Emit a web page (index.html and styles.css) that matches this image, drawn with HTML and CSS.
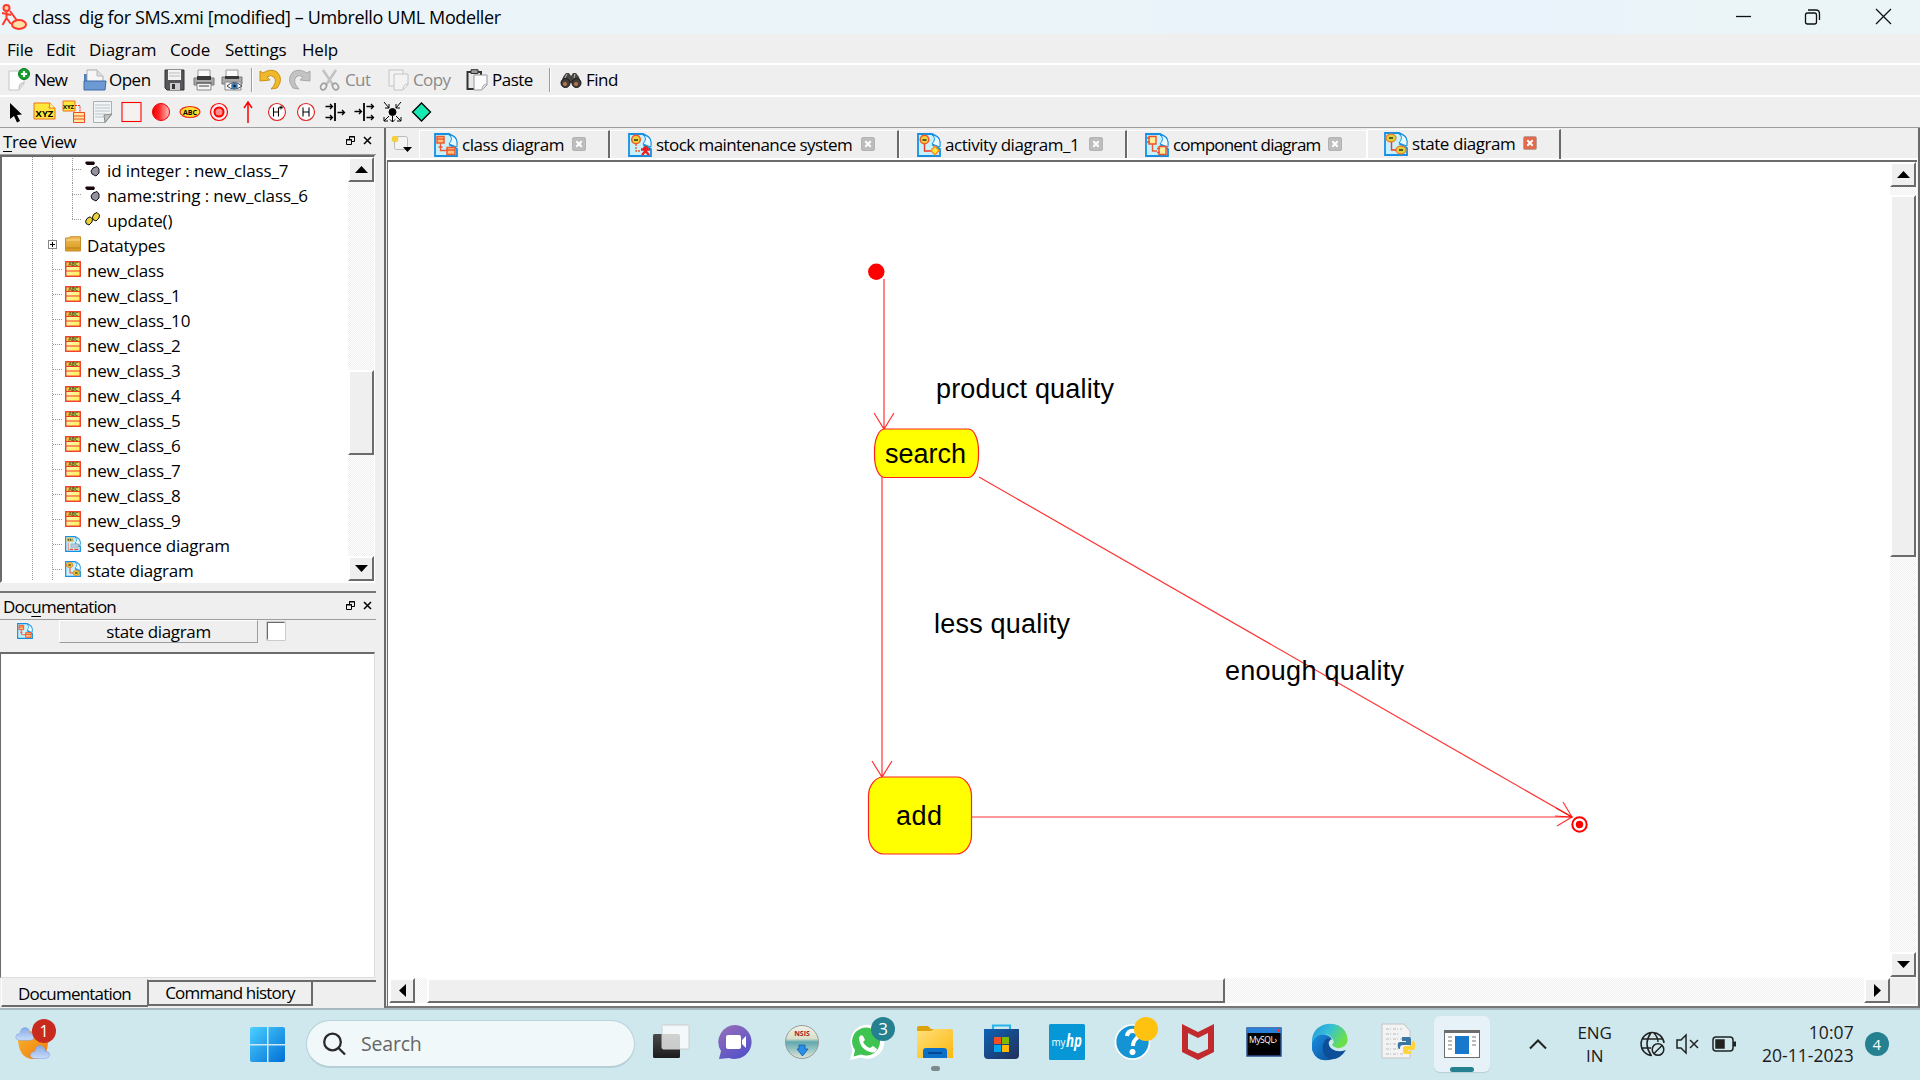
FILE: index.html
```html
<!DOCTYPE html>
<html lang="en">
<head>
<meta charset="utf-8">
<title>Umbrello UML Modeller</title>
<link rel="stylesheet" href="styles.css">
</head>
<body>
<svg class="defs" width="0" height="0">
  <defs>
    <linearGradient id="gYellow" x1="0" y1="0" x2="1" y2="1"><stop offset="0" stop-color="#fffbd8"/><stop offset="1" stop-color="#ffef4a"/></linearGradient>
    <linearGradient id="gFolder" x1="0" y1="0" x2="0" y2="1"><stop offset="0" stop-color="#f0bd55"/><stop offset="1" stop-color="#d8981f"/></linearGradient>
    <linearGradient id="gRed" x1="0" x2="1"><stop offset="0" stop-color="#f00000"/><stop offset=".35" stop-color="#ff2020"/><stop offset="1" stop-color="#ffc0c0"/></linearGradient>
    <linearGradient id="gWin" x1="0" y1="0" x2="1" y2="1"><stop offset="0" stop-color="#4cd0ff"/><stop offset="1" stop-color="#006fd6"/></linearGradient>
    <linearGradient id="gDark" x1="0" y1="0" x2="0" y2="1"><stop offset="0" stop-color="#4a4a4a"/><stop offset="1" stop-color="#1c1c1c"/></linearGradient>
    <linearGradient id="gChat" x1="0" y1="0" x2=".6" y2="1"><stop offset="0" stop-color="#9a6fb8"/><stop offset="1" stop-color="#5553c8"/></linearGradient>
    <linearGradient id="gExp" x1="0" y1="0" x2="1" y2="1"><stop offset="0" stop-color="#ffe07a"/><stop offset="1" stop-color="#fbb80f"/></linearGradient>
    <linearGradient id="gStore" x1="0" y1="0" x2="1" y2="1"><stop offset="0" stop-color="#0d63b5"/><stop offset="1" stop-color="#222f5a"/></linearGradient>
    <linearGradient id="gEdgeA" x1="0" y1="0" x2="1" y2=".4"><stop offset="0" stop-color="#2494dc"/><stop offset=".5" stop-color="#35c0d8"/><stop offset="1" stop-color="#6be04a"/></linearGradient>
    <linearGradient id="gEdgeB" x1="0" y1="0" x2="1" y2="1"><stop offset="0" stop-color="#1a8fe0"/><stop offset="1" stop-color="#0b4f9e"/></linearGradient>
    <linearGradient id="gSun" x1="0" y1="0" x2="1" y2="1"><stop offset="0" stop-color="#f7b52c"/><stop offset="1" stop-color="#f07a10"/></linearGradient>
    <linearGradient id="gCloud" x1="0" y1="0" x2="0" y2="1"><stop offset="0" stop-color="#86a9e6"/><stop offset="1" stop-color="#c9dcfa"/></linearGradient>
    <linearGradient id="gDisc" x1="0" y1="0" x2="0" y2="1"><stop offset="0" stop-color="#f1f1ea"/><stop offset=".4" stop-color="#d9dfc9"/><stop offset=".5" stop-color="#5fa9b0"/><stop offset="1" stop-color="#dfe6d8"/></linearGradient>

    <symbol id="page" viewBox="0 0 24 24"><path d="M1 1H15L19 3Q23 5 22.500 11Q19 8 16 12L23 16V23H1Z" fill="#c9f1fd" stroke="#168fe0" stroke-width="1.800"/><path d="M15 2Q20 5 15 11L23 14V9Q22 3 15 2Z" fill="#e9faff" stroke="#168fe0"/></symbol>
    <symbol id="classDiag" viewBox="0 0 24 24"><use href="#page"/><g fill="#ffc27a" stroke="#f05a32" stroke-width="1.500"><path d="M3 3.500H10V10H3ZM3 6H10M13 14.500H21V21.500H13ZM13 17H21"/></g><path d="M6.500 10V17.500H13M4.500 14H8.500" fill="none" stroke="#f05a32" stroke-width="1.300"/></symbol>
    <symbol id="stockDiag" viewBox="0 0 24 24"><use href="#page"/><circle cx="8" cy="6.500" r="4.300" fill="#f0d040" stroke="#ee5a28" stroke-width="1.500"/><path d="M6 7H10" stroke="#5a5a20" stroke-width="2"/><path d="M8 11V18H12" fill="none" stroke="#f05a32" stroke-width="1.400" stroke-dasharray="2 1"/><path d="M13 16.500H22M14 22L17.500 18L21 22" fill="none" stroke="#e82020" stroke-width="2.400"/><circle cx="17.500" cy="15.500" r="2.600" fill="#e82020"/></symbol>
    <symbol id="activityDiag" viewBox="0 0 24 24"><use href="#page"/><circle cx="7.500" cy="6.500" r="4.300" fill="#f0d040" stroke="#ee5a28" stroke-width="1.500"/><path d="M5.500 7H9.500" stroke="#5a5a20" stroke-width="2"/><path d="M7.500 11V18H14" fill="none" stroke="#f03a22" stroke-width="1.400"/><path d="M18 13L22 17.500L18 22L14 17.500Z" fill="#ffe63a" stroke="#f08a20" stroke-width="1.300"/></symbol>
    <symbol id="componentDiag" viewBox="0 0 24 24"><use href="#page"/><g fill="#ffef9a" stroke="#f0502a" stroke-width="1.400"><path d="M4 3.500H11V11H4ZM14 13.500H21V21.500H14Z"/><path d="M2 5H5M2 9H5M12 15.500H15M12 19.500H15"/></g><path d="M7.500 11V18H12" fill="none" stroke="#f05a32" stroke-width="1.400"/></symbol>
    <symbol id="stateDiag" viewBox="0 0 24 24"><use href="#page"/><g fill="#d9d238" stroke="#f07a32" stroke-width="1.300"><ellipse cx="7" cy="6" rx="5" ry="3.900"/><ellipse cx="17" cy="18" rx="5" ry="3.900"/></g><path d="M5 6H9M15 18H19" stroke="#5a5a20" stroke-width="2"/><path d="M7.500 10V18H12" fill="none" stroke="#f03a22" stroke-width="1.400"/></symbol>
    <symbol id="seqDiag" viewBox="0 0 24 24"><use href="#page"/><path d="M2 2H13V9H2Z" fill="#d8ce78"/><path d="M4 5.500H11" stroke="#5a5a30" stroke-width="3" stroke-dasharray="2 1"/><path d="M9 12H20V17H9Z" fill="#b5cdd8" stroke="#9ab"/><path d="M7 20H12M14 20H20" stroke="#f04a32" stroke-width="2"/><path d="M5 10V22" stroke="#f05a32"/></symbol>
    <symbol id="cls" viewBox="0 0 16 16"><rect x=".75" y=".75" width="14.500" height="14.500" fill="url(#gYellow)"/><path d="M1 1H15V5H1Z" fill="#e4d44e"/><path d="M1 5.500H15M1 10H15" stroke="#f03a28" stroke-width="1.200"/><rect x=".75" y=".75" width="14.500" height="14.500" fill="none" stroke="#f03a28" stroke-width="1.400"/><text x="8" y="4.800" text-anchor="middle" font-size="5" font-weight="700" fill="#55551c">ABC</text></symbol>
    <symbol id="attr" viewBox="0 0 16 16"><path d="M1 .5H9L10 2L9 4H2L0 2Z" fill="#1a0508"/><path d="M8 7L12 5.500L14 8V12L11 15L7 13L6 10Z" fill="#9490a0" stroke="#111"/></symbol>
    <symbol id="oper" viewBox="0 0 16 16"><path d="M2 7.500L5 5.800L7.500 8L7 11L4 14L1 12.500L.7 10ZM9 3L12 1.500L14.500 4L14 7L11 10L8 8.500L7.500 6Z" fill="#ead23a" stroke="#111"/></symbol>
    <symbol id="folder" viewBox="0 0 16 16"><path d="M.5 2H4L5 .7H15.500V15H.5Z" fill="url(#gFolder)" stroke="#c98d28"/><path d="M1 4H15" stroke="#f8d890"/><path d="M1 12H15" stroke="#bb7c14"/></symbol>
    <symbol id="float" viewBox="0 0 9 9"><path d="M3.500 3V.5H8.500V5.500H6M3 1H9M.5 3.500H5.500V8.500H.5ZM0 4H6" fill="none" stroke="#000"/></symbol>
    <symbol id="xx" viewBox="0 0 9 9"><path d="M1 1L8 8M8 1L1 8" stroke="#000" stroke-width="1.500"/></symbol>
    <symbol id="tabx" viewBox="0 0 14 14"><rect x=".5" y=".5" width="13" height="13" rx="1.500" fill="currentColor" stroke="#9b9b9b" stroke-opacity=".6"/><path d="M4.300 4.300L9.700 9.700M9.700 4.300L4.300 9.700" stroke="#fff" stroke-width="2"/></symbol>
    <symbol id="cloud" viewBox="0 0 22 16"><path d="M5 15.500Q.5 15 .8 11.500Q1.500 8 5.500 8Q6 2 11 1.500Q16 2 16.500 7.500Q21 7.500 21.300 11.500Q21 15 17 15.500Z" fill="url(#gCloud)" stroke="#7a9bdc" stroke-width=".5"/></symbol>
  </defs>
</svg>

<div class="screen">
  <header class="titlebar">
    <svg class="appicon" width="26" height="26" viewBox="0 0 26 26"><g fill="none" stroke="#ff3a2a" stroke-width="2"><circle cx="5.500" cy="4" r="3" fill="#ffd0b0"/><path d="M5.500 7V14M1 9L10 11M5.500 14L1.500 21M5.500 14L10 20M9 7L17 18"/><ellipse cx="18" cy="20.500" rx="7" ry="4.500" fill="#ffe0a8"/></g></svg>
    <span class="title">class  dig for SMS.xmi [modified] – Umbrello UML Modeller</span>
    <svg class="winbtns" width="160" height="20" viewBox="0 0 160 20" fill="none" stroke="#111" stroke-width="1.300"><path d="M0 9.500H15"/><rect x="69.500" y="6" width="11" height="11" rx="2"/><path d="M72 3H80Q83.500 3 83.500 7V13"/><path d="M140 2L155 17M155 2L140 17"/></svg>
  </header>
  <nav class="menubar"><span class="m1">File</span><span class="m2">Edit</span><span class="m3">Diagram</span><span class="m4">Code</span><span class="m5">Settings</span><span class="m6">Help</span></nav>
  <div class="toolbar main-tools">
    <div class="tool w-new"><svg width="24" height="24" viewBox="0 0 24 24"><path d="M2 3H17V16L12 22H2Z" fill="#fdfdfd" stroke="#c4c4c4"/><path d="M17 15Q12 14 12 21" fill="#ddd" stroke="#bbb"/><circle cx="17" cy="6" r="5.500" fill="#16a02c" stroke="#0a7a1c"/><path d="M17 3V9M14 6H20" stroke="#fff" stroke-width="2.200"/></svg><span>New</span></div>
    <div class="tool w-open"><svg width="24" height="24" viewBox="0 0 24 24"><path d="M1 6H5L6 4H13V14H1Z" fill="#4b7fc0"/><path d="M4 2H14L20 8V17H4Z" fill="#f6f6f6" stroke="#aaa"/><path d="M14 2V8H20" fill="#ddd" stroke="#bbb"/><path d="M1 13H23L22 22H1Z" fill="#6d9ad2" stroke="#3d6aa8"/></svg><span>Open</span></div>
    <div class="tool w-save"><svg width="22" height="22" viewBox="0 0 22 22"><path d="M1 1H20V21H3L1 19Z" fill="#55565a" stroke="#333"/><path d="M4 1H17V11H4Z" fill="#f3f3f3"/><path d="M5 4H16M5 7H16" stroke="#bbb"/><path d="M6 14H16V21H6Z" fill="#ccc"/><path d="M8 15H11V20H8Z" fill="#333"/></svg></div>
    <div class="tool w-print"><svg width="22" height="22" viewBox="0 0 22 22"><path d="M5 1H17V9H5Z" fill="#fafafa" stroke="#999"/><path d="M1 9H21V16H1Z" fill="#aaa" stroke="#777"/><path d="M4 7H18V11H4Z" fill="#3a3a3a"/><path d="M4 14H18V21H4Z" fill="#f3f3f3" stroke="#888"/><path d="M3 14H19M6 17H16" stroke="#444"/></svg></div>
    <div class="tool w-prev"><svg width="22" height="22" viewBox="0 0 22 22"><path d="M5 1H17V9H5Z" fill="#fafafa" stroke="#999"/><path d="M1 8H21V15H1Z" fill="#aaa" stroke="#777"/><path d="M4 7H18V10H4Z" fill="#3a3a3a"/><path d="M4 13H20V21H4Z" fill="#f3f3f3" stroke="#888"/><path d="M6 17Q13 10 21 17Q13 23 6 17Z" fill="#fff" stroke="#445"/><circle cx="13.500" cy="17" r="3.300" fill="#3c7cae"/><circle cx="13.500" cy="17" r="1.300" fill="#123"/></svg></div>
    <i class="sep"></i>
    <div class="tool w-undo"><svg width="24" height="22" viewBox="0 0 24 22"><path d="M1 2L4 4Q12 -1 18 3Q25 10 18 19L12 20Q19 13 15 8Q12 5 8 8L11 11L1 12Z" fill="#f0b92c" stroke="#c99012"/></svg></div>
    <div class="tool w-redo"><svg width="24" height="22" viewBox="0 0 24 22"><path d="M23 2L20 4Q12 -1 6 3Q-1 10 6 19L12 20Q5 13 9 8Q12 5 16 8L13 11L23 12Z" fill="#c3c3c3" stroke="#a8a8a8"/></svg></div>
    <div class="tool off w-cut"><svg width="22" height="22" viewBox="0 0 22 22" fill="none" stroke="#a0a0a0"><path d="M4 1L14 16M17 1L7 16" stroke="#c2c2c2" stroke-width="2.500"/><ellipse cx="4.500" cy="17.500" rx="2.700" ry="3.500" stroke-width="1.700" transform="rotate(30 4.500 17.500)"/><ellipse cx="16.500" cy="17.500" rx="2.700" ry="3.500" stroke-width="1.700" transform="rotate(-30 16.500 17.500)"/></svg><span>Cut</span></div>
    <div class="tool off w-copy"><svg width="22" height="22" viewBox="0 0 22 22" fill="#f3f3f3" stroke="#c4c4c4"><path d="M1 1H15V17H1Z"/><path d="M6 5H20V16L15 21H6Z"/><path d="M20 15Q15 15 15 21"/></svg><span>Copy</span></div>
    <div class="tool w-paste"><svg width="22" height="22" viewBox="0 0 22 22"><path d="M1.500 3H15V20H1.500Z" fill="#e8e8e8" stroke="#333" stroke-width="2"/><path d="M5 .7H12V4.500H5Z" fill="#999" stroke="#333"/><path d="M8 6H21V16L16 21H8Z" fill="#fcfcfc" stroke="#999"/><path d="M21 15Q16 15 16 21" fill="#ddd" stroke="#aaa"/></svg><span>Paste</span></div>
    <i class="sep"></i>
    <div class="tool w-find"><svg width="22" height="18" viewBox="0 0 22 18"><path d="M3 6L6 2H9L11 5L13 2H16L19 6L21 12H1Z" fill="#4a4440"/><circle cx="5.500" cy="12" r="4.500" fill="#443d3a" stroke="#181818"/><circle cx="16.500" cy="12" r="4.500" fill="#443d3a" stroke="#181818"/><circle cx="5" cy="13" r="2" fill="#b07850"/><circle cx="16" cy="13" r="2" fill="#b07850"/><path d="M7 3L5 7M15 3L14 7" stroke="#bbb"/></svg><span>Find</span></div>
  </div>
  <div class="toolbar uml-tools">
    <svg viewBox="0 0 29 26"><path d="M9 4L21 15.500L16 16L19 22L16 23.500L13 17L9 20Z" fill="#000"/></svg>
    <svg viewBox="0 0 29 26"><path d="M4 4H20L25 9V20H4Z" fill="#ffe63c" stroke="#f07018"/><path d="M20 4L19 9H25" fill="#fff8a0" stroke="#f07018"/><text x="14.500" y="17.500" text-anchor="middle" font-size="9.500" font-weight="700">XYZ</text></svg>
    <svg viewBox="0 0 29 26"><path d="M4 2H16V12H4Z" fill="#ffe63c" stroke="#f07018"/><text x="9.500" y="10" text-anchor="middle" font-size="6" font-weight="700">XYZ</text><path d="M16 6.500H21V13" fill="none" stroke="#f22" stroke-dasharray="2 1"/><path d="M14.500 13.500H25.500V23.500H14.500ZM14.500 17H25.500M14.500 20H25.500" fill="#ffe9a0" stroke="#f04a20"/></svg>
    <svg viewBox="0 0 29 26"><path d="M5.500 2.500H23.500V16L17 23.500H5.500Z" fill="#f2f5f6" stroke="#a9b0b3"/><path d="M7 6H22M7 9H22M7 12H22M7 15H18M7 18H16" stroke="#b9c3c8"/><path d="M23.500 15L16 16L17 23.500Z" fill="#c4c4c4" stroke="#888"/></svg>
    <svg viewBox="0 0 29 26"><rect x="5" y="3.500" width="19" height="19" fill="#f5f1f1" stroke="#f00" stroke-width="1.100"/></svg>
    <svg viewBox="0 0 29 26"><circle cx="15" cy="13" r="8.500" fill="url(#gRed)" stroke="#f00000"/></svg>
    <svg viewBox="0 0 29 26"><ellipse cx="15" cy="13" rx="10" ry="5.500" fill="#ffe030" stroke="#f02a18" stroke-width="1.200"/><text x="15" y="15.800" text-anchor="middle" font-size="7" font-weight="700">ABC</text></svg>
    <svg viewBox="0 0 29 26"><circle cx="15" cy="13" r="8.500" fill="#fbeeee" stroke="#f00" stroke-width="1.200"/><circle cx="15" cy="13" r="4.500" fill="#ff8a8a" stroke="#f00" stroke-width="2"/></svg>
    <svg viewBox="0 0 29 26"><path d="M15 24V4M11 9L15 3L19 9" fill="none" stroke="#f00" stroke-width="1.500"/></svg>
    <svg viewBox="0 0 29 26"><circle cx="15" cy="13" r="8.500" fill="#fff" stroke="#e02020" stroke-width="1.100"/><path d="M11.500 8.500V17.500M11.500 13H16.500M16.500 8.500V17.500" fill="none" stroke="#000" stroke-width="1.100"/><path d="M19 6.500V10.500M17.200 8.500H20.800M17.700 7.200L20.300 9.800M20.300 7.200L17.700 9.800" stroke="#000" stroke-width=".8"/></svg>
    <svg viewBox="0 0 29 26"><circle cx="15" cy="13" r="8.500" fill="#fff" stroke="#e02020" stroke-width="1.100"/><path d="M12 8.500V17.500M12 13H18M18 8.500V17.500" fill="none" stroke="#000" stroke-width="1.100"/></svg>
    <svg viewBox="0 0 29 26" fill="none" stroke="#000"><path d="M15 4V22" stroke-width="1.800"/><path d="M5.500 7.500H12.500M5.500 18.500H12.500M17.500 13.500H24.500M10 5L12.500 7.500L10 10M10 16L12.500 18.500L10 21M22 11L24.500 13.500L22 16" stroke-width="1.300"/></svg>
    <svg viewBox="0 0 29 26" fill="none" stroke="#000"><path d="M15 4V22" stroke-width="1.800"/><path d="M5.500 12.500H12.500M17.500 7.500H24.500M17.500 18.500H24.500M10 10L12.500 12.500L10 15M22 5L24.500 7.500L22 10M22 16L24.500 18.500L22 21" stroke-width="1.300"/></svg>
    <svg viewBox="0 0 29 26" fill="none" stroke="#000"><circle cx="14.500" cy="13" r="3.500" fill="#000"/><path d="M6 3L11 9M23 3L18 9M11 5V9H7M18 5V9H22M11 17L6 22M18 17L23 22M14.500 17V23M6 18V22H10M23 18V22H19M12 20.500L14.500 23L17 20.500"/></svg>
    <svg viewBox="0 0 29 26"><path d="M14.500 4L23.500 13L14.500 22L5.500 13Z" fill="#17e8b4" stroke="#000" stroke-width="1.300"/></svg>
  </div>

  <main class="work">
    <aside class="side">
      <div class="docktitle"><span><u>T</u>ree View</span><svg width="9" height="9"><use href="#float"/></svg><svg width="9" height="9"><use href="#xx"/></svg></div>
      <div class="treebox">
        <div class="tree">
          <div class="row deep"><svg><use href="#attr"/></svg><span>id integer : new_class_7</span></div>
          <div class="row deep"><svg><use href="#attr"/></svg><span>name:string : new_class_6</span></div>
          <div class="row deep last"><svg><use href="#oper"/></svg><span>update()</span></div>
          <div class="row expand"><svg><use href="#folder"/></svg><span>Datatypes</span></div>
          <div class="row"><svg><use href="#cls"/></svg><span>new_class</span></div>
          <div class="row"><svg><use href="#cls"/></svg><span>new_class_1</span></div>
          <div class="row"><svg><use href="#cls"/></svg><span>new_class_10</span></div>
          <div class="row"><svg><use href="#cls"/></svg><span>new_class_2</span></div>
          <div class="row"><svg><use href="#cls"/></svg><span>new_class_3</span></div>
          <div class="row"><svg><use href="#cls"/></svg><span>new_class_4</span></div>
          <div class="row"><svg><use href="#cls"/></svg><span>new_class_5</span></div>
          <div class="row"><svg><use href="#cls"/></svg><span>new_class_6</span></div>
          <div class="row"><svg><use href="#cls"/></svg><span>new_class_7</span></div>
          <div class="row"><svg><use href="#cls"/></svg><span>new_class_8</span></div>
          <div class="row"><svg><use href="#cls"/></svg><span>new_class_9</span></div>
          <div class="row"><svg><use href="#seqDiag"/></svg><span>sequence diagram</span></div>
          <div class="row"><svg><use href="#stateDiag"/></svg><span>state diagram</span></div>
        </div>
        <div class="vscroll">
          <div class="sbtn"><svg width="13" height="7"><path d="M6.500 0L13 7H0Z"/></svg></div>
          <div class="thumb tree-thumb"></div>
          <div class="sbtn end"><svg width="13" height="7"><path d="M0 0H13L6.500 7Z"/></svg></div>
        </div>
      </div>
      <div class="docktitle doc"><span>Doc<u>u</u>mentation</span><svg width="9" height="9"><use href="#float"/></svg><svg width="9" height="9"><use href="#xx"/></svg></div>
      <div class="docbar"><svg width="16" height="16"><use href="#classDiag"/></svg><div class="docname">state diagram</div><div class="check"></div></div>
      <div class="doctext"></div>
      <div class="docktabs"><div class="dt on">Documentation</div><div class="dt">Command history</div><div class="dt-rest"></div></div>
    </aside>

    <section class="editor">
      <div class="tabs">
        <div class="corner"><svg width="22" height="20" viewBox="0 0 22 20"><rect x="3.500" y="1.500" width="13" height="13" rx="2" fill="#f3f3f3" stroke="#bbb"/><circle cx="4" cy="4" r="3.300" fill="#f4ce3c"/><path d="M12 12H21L16.500 17Z"/></svg></div>
        <div class="tab t1"><svg class="ti"><use href="#classDiag"/></svg><span>class diagram</span><svg class="tx"><use href="#tabx"/></svg></div>
        <div class="tab t2"><svg class="ti"><use href="#stockDiag"/></svg><span>stock maintenance system</span><svg class="tx"><use href="#tabx"/></svg></div>
        <div class="tab t3"><svg class="ti"><use href="#activityDiag"/></svg><span>activity diagram_1</span><svg class="tx"><use href="#tabx"/></svg></div>
        <div class="tab t4"><svg class="ti"><use href="#componentDiag"/></svg><span>component diagram</span><svg class="tx"><use href="#tabx"/></svg></div>
        <div class="tab t5 active"><svg class="ti"><use href="#stateDiag"/></svg><span>state diagram</span><svg class="tx"><use href="#tabx"/></svg></div>
      </div>
      <div class="view">
        <svg class="canvas" width="1501" height="816" viewBox="389 162 1501 816">
          <g fill="none" stroke="#ff0000" stroke-opacity=".8" stroke-width="1.200">
            <path d="M884 279V429M874 413L884 429L894 413"/>
            <path d="M882 477V777M872 761L882 777L892 761"/>
            <path d="M979 477L1572 817M1563 802L1572 817L1555 816"/>
            <path d="M972 817H1572M1556 808L1572 817L1557 826"/>
          </g>
          <circle cx="876.300" cy="271.700" r="8.200" fill="#f00"/>
          <rect x="874.500" y="429" width="104" height="48.500" rx="10" ry="22" fill="#ff0" stroke="#f22" stroke-width="1.200"/>
          <rect x="868.500" y="777" width="103" height="77" rx="15" ry="19" fill="#ff0" stroke="#f22" stroke-width="1.200"/>
          <circle cx="1579.500" cy="824.500" r="7.200" fill="#fff" stroke="#f00" stroke-width="2"/><circle cx="1579.500" cy="824.500" r="3.700" fill="#f00"/>
          <g class="dtext">
            <text x="885" y="462.500" textLength="81">search</text>
            <text x="896" y="825" textLength="46">add</text>
            <text x="936" y="398" textLength="178">product quality</text>
            <text x="934" y="632.500" textLength="136">less quality</text>
            <text x="1225" y="680" textLength="179">enough quality</text>
          </g>
        </svg>
        <div class="vscroll big">
          <div class="sbtn"><svg width="13" height="7"><path d="M6.500 0L13 7H0Z"/></svg></div>
          <div class="thumb view-thumb"></div>
          <div class="sbtn end"><svg width="13" height="7"><path d="M0 0H13L6.500 7Z"/></svg></div>
        </div>
        <div class="hscroll">
          <div class="sbtn"><svg width="7" height="13"><path d="M7 0V13L0 6.500Z"/></svg></div>
          <div class="thumb h-thumb"></div>
          <div class="sbtn hend"><svg width="7" height="13"><path d="M0 0V13L7 6.500Z"/></svg></div>
        </div>
        <div class="nook"></div>
      </div>
    </section>
  </main>

  <footer class="taskbar">
    <svg class="weather" width="48" height="56" viewBox="0 0 48 56"><path d="M6 22Q8 16 20 16Q34 16 36 28Q35 44 22 44Q6 44 6 22Z" fill="url(#gSun)"/><use href="#cloud" x="3" y="11" width="20" height="15"/><use href="#cloud" x="17" y="29" width="22" height="15"/><circle cx="32" cy="16" r="12" fill="#c92a1e"/><text x="32" y="22" text-anchor="middle" font-size="16" fill="#fff">1</text></svg>
    <svg class="start" width="36" height="36" viewBox="0 0 36 36"><path d="M2 0H17V17H0V2Q0 0 2 0ZM18.500 0H33Q35 0 35 2V17H18.500ZM0 18.500H17V35H2Q0 35 0 33ZM18.500 18.500H35V33Q35 35 33 35H18.500Z" fill="url(#gWin)"/></svg>
    <div class="search"><svg width="24" height="24" viewBox="0 0 24 24" fill="none" stroke="#2a2a2a" stroke-width="2.300"><circle cx="10.500" cy="10" r="8.300"/><path d="M16.500 16L23 22.500"/></svg><span>Search</span></div>
    <div class="apps">
      <div class="app"><svg viewBox="0 0 48 56"><rect x="9" y="18" width="27" height="24" rx="1.500" fill="url(#gDark)"/><rect x="18" y="9" width="27" height="24" rx="1.500" fill="#fff" fill-opacity=".75" stroke="#ccc"/></svg></div>
      <div class="app"><svg viewBox="0 0 48 56"><path d="M24 9A17 17 0 1 1 17 42L7 43L9 35A17 17 0 0 1 24 9Z" fill="url(#gChat)"/><rect x="14" y="19" width="15" height="14" rx="2" fill="#fff"/><path d="M30 24L34 20V32L30 28Z" fill="#fff"/></svg></div>
      <div class="app"><svg viewBox="0 0 48 56"><circle cx="24" cy="26" r="16.500" fill="url(#gDisc)" stroke="#999c98"/><text x="24" y="20" text-anchor="middle" font-size="7" font-weight="700" fill="#a22">NSIS</text><path d="M21 29H27V33H30L24.500 40L19 33H21Z" fill="#2a8fe6" stroke="#0a5aa8" stroke-width=".8"/></svg></div>
      <div class="app"><svg viewBox="0 0 48 56"><path d="M6 44L8.500 34A17 17 0 1 1 17 41.500Z" fill="#fff"/><path d="M9.500 40.500L11 34A14 14 0 1 1 17 38.500Z" fill="#3fc351"/><path d="M15 22Q16 18 19 20L21 24L19 26Q22 31 26 32L29 30L33 33Q32 37 28 36.500Q16 34 15 22Z" fill="#fff"/><circle cx="39" cy="13" r="12" fill="#25808f"/><text x="39" y="19" text-anchor="middle" font-size="17" fill="#fff">3</text></svg></div>
      <div class="app"><svg viewBox="0 0 48 56"><path d="M6 12Q6 10 8 10H17L20 13H40V22H6Z" fill="#dda20c"/><path d="M6 15H20L23 13H40Q42 13 42 15V42H6Z" fill="url(#gExp)"/><path d="M12 42V35Q12 32 15 32H33Q36 32 36 35V42Z" fill="#0d70c8"/><path d="M17 37H31" stroke="#06458a" stroke-width="1.800"/><rect x="20" y="50" width="9" height="5" rx="2.500" fill="#7d898d"/></svg></div>
      <div class="app"><svg viewBox="0 0 48 56"><path d="M16 15V9.500H33V15" fill="none" stroke="#28b6ea" stroke-width="2.200"/><path d="M7 13H42V39Q42 43 38 43H11Q7 43 7 39Z" fill="url(#gStore)"/><path d="M17 21H24V28H17Z" fill="#f25022"/><path d="M25 21H32V28H25Z" fill="#7fba00"/><path d="M17 29H24V36H17Z" fill="#00a4ef"/><path d="M25 29H32V36H25Z" fill="#ffb900"/></svg></div>
      <div class="app"><svg viewBox="0 0 48 56"><rect x="6" y="8" width="36" height="36" rx="1.500" fill="#0797d6"/><text x="8.500" y="30" font-size="10" fill="#fff" textLength="14" lengthAdjust="spacingAndGlyphs">my</text><text x="23" y="30.500" font-size="17" font-style="italic" font-weight="700" fill="#fff" textLength="16" lengthAdjust="spacingAndGlyphs">hp</text></svg></div>
      <div class="app"><svg viewBox="0 0 48 56"><circle cx="23.500" cy="26" r="17" fill="#1494d4" stroke="#fff" stroke-width="1.700"/><path d="M18 20Q19 14 25 15Q31 17 28 22Q24 25 24 30" fill="none" stroke="#fff" stroke-width="4"/><circle cx="23.500" cy="36" r="3" fill="#fff"/><circle cx="37" cy="13" r="12" fill="#ffc20e"/></svg></div>
      <div class="app"><svg viewBox="0 0 48 56"><path d="M7 8L23 16L39 8V36L23 44L7 36ZM13 17V33L23 37.500L33 33V17L23 22Z" fill="#c12b2d" fill-rule="evenodd"/></svg></div>
      <div class="app"><svg viewBox="0 0 48 56"><rect x="6" y="12" width="34" height="28" fill="#000" stroke="#2a5290" stroke-width="1.500"/><path d="M6 12H40V17H6Z" fill="#2a7fd8"/><path d="M36 13H39V16H36Z" fill="#e33"/><text x="8" y="27" font-size="8.500" fill="#fff" textLength="28">MySQL›</text></svg></div>
      <div class="app"><svg viewBox="0 0 48 56"><path d="M5 28Q4 14 16 9Q30 5 38 15Q44 26 36 31Q29 34 25 29Q29 25 23 20Q14 15 5 28Z" fill="url(#gEdgeA)"/><path d="M5 27Q11 15 22 20Q25 22 25 24Q19 20 16 29Q17 38 26 43Q10 48 5 34Z" fill="url(#gEdgeB)"/><path d="M16 28Q19 20 24 23Q19 28 25 33Q31 37 39 34Q32 45 22 43Q14 38 16 28Z" fill="#0c4f98"/></svg></div>
      <div class="app"><svg viewBox="0 0 48 56"><path d="M8 8H30L36 15V42H8Z" fill="#f3f3f3" stroke="#c4c4c4"/><path d="M12 13H28M12 18H24M12 23H30M12 28H22M12 33H24M12 38H30" stroke="#bbb" stroke-dasharray="3 1 1 2"/><path d="M28 21H35Q37 21 37 24V29H29Q26 29 26 32V33H25Q23 31 24 27Q24 26 27 26H32V25H28Z" fill="#3a75a4"/><path d="M37 38H31Q29 38 29 35V32Q29 30 32 30H36Q38 30 38 25H40Q42 28 41 32Q41 34 39 34H34V35H37Z" fill="#ffd43b"/></svg></div>
      <div class="app current"><svg viewBox="0 0 48 56"><rect x="6.500" y="14.500" width="35" height="27" fill="#fff" stroke="#6d6d6d"/><path d="M6 14H42V17H6Z" fill="#6d6d6d"/><path d="M17 20H31V38H17Z" fill="#1878cc"/><path d="M10 21H14M10 25H14M10 29H14M10 33H14M34 21H38M34 25H38M34 29H38" stroke="#bbb" stroke-width="2"/><rect x="12" y="51" width="24" height="5" rx="2.500" fill="#25808f"/></svg></div>
    </div>
    <svg class="chev" width="18" height="11" viewBox="0 0 18 11"><path d="M1 9.500L9 1.500L17 9.500" fill="none" stroke="#222" stroke-width="2"/></svg>
    <div class="lang"><span>ENG</span><span>IN</span></div>
    <svg class="sys" width="98" height="28" viewBox="0 0 98 28" fill="none" stroke="#222" stroke-width="1.500"><path d="M12 25.500A11.500 11.500 0 1 1 24 13M11 25Q3 14 11 2.500M13.500 2.500Q18 7 18 12M2 9H23M2 18H11"/><circle cx="18" cy="19.500" r="5.800"/><path d="M14 23.500L22 15.500"/><path d="M37 10H41L46 5V23L41 18H37Z"/><path d="M50 10L58 18M58 10L50 18"/><rect x="73" y="7" width="20" height="14" rx="3"/><path d="M76 10H84V18H76Z" fill="#222"/><path d="M94.500 11.500V16.500" stroke-width="3"/></svg>
    <div class="clock"><span>10:07</span><span>20-11-2023</span></div>
    <div class="count">4</div>
  </footer>
</div>
</body>
</html>
```
FILE: styles.css
```css
* { box-sizing: border-box; }
body { margin: 0; overflow: hidden; background: #efefef; color: #000; font: 17px "Open Sans", "Noto Sans", sans-serif; }
svg { display: block; flex: none; }
svg text { font-family: "Open Sans", "Noto Sans", sans-serif; }
svg .dtext text, .dtext text { font-family: "Liberation Sans", Arial, sans-serif; font-size: 27px; }
.defs { position: absolute; }
.screen { width: 1920px; height: 1080px; display: flex; flex-direction: column; }
span { white-space: pre; }

.titlebar { height: 34px; flex: none; display: flex; align-items: center; background: linear-gradient(90deg, #ebf4f8 50%, #eaf2fb 80%, #ebf5f7 90%); }
.appicon { margin: 0 5px 0 1px; }
.title { font-size: 18px; letter-spacing: -.38px; }
.winbtns { margin: 0 24px 0 auto; }
.menubar { height: 31px; flex: none; padding: 1px 0 0 7px; display: flex; align-items: center; border-bottom: 2px solid; border-image: linear-gradient(#9d9d9d 50%, #fff 50%) 2; }
.m1 { width: 39px; } .m2 { width: 43px; } .m3 { width: 81px; } .m4 { width: 55px; } .m5 { width: 77px; }
.menubar span { letter-spacing: -.2px; }
.menubar .m3 { letter-spacing: 0; }
.toolbar { flex: none; display: flex; align-items: center; }
.main-tools { height: 32px; padding-left: 7px; border-bottom: 2px solid; border-image: linear-gradient(#9d9d9d 50%, #fff 50%) 2; }
.tool { display: flex; align-items: center; gap: 4px; letter-spacing: -.5px; }
.tool span { margin-top: -2px; }
.off { color: #8a8a8a; }
.w-new { width: 76px; gap: 3px; letter-spacing: -.8px; } .w-open { width: 81px; gap: 2px; } .w-save { width: 29px; } .w-print { width: 28px; } .w-prev { width: 30px; }
.w-undo { width: 28px; } .w-redo { width: 32px; } .w-cut { width: 69px; letter-spacing: -.6px; } .w-copy { width: 78px; gap: 3px; letter-spacing: -.6px; } .w-paste { width: 83px; } .w-find { gap: 4px; margin-left: 3px; }
.sep { width: 2px; height: 24px; border-left: 1px solid #9d9d9d; border-right: 1px solid #fff; margin-right: 6px; }
.uml-tools { height: 31px; padding-left: 1px; border-bottom: 1px solid #9d9d9d; }
.uml-tools svg { width: 29px; height: 26px; }

.work { height: 880px; flex: none; display: flex; }
.side { width: 376px; flex: none; display: flex; flex-direction: column; }
.docktitle { height: 27px; flex: none; display: flex; align-items: center; gap: 8px; padding: 0 4px 0 3px; letter-spacing: -.4px; border-bottom: 1px solid #9d9d9d; }
.docktitle span { flex: 1; }
.docktitle u { text-decoration-thickness: 1px; text-underline-offset: 3px; }
.docktitle svg { margin-top: -2px; }
.treebox { height: 428px; flex: none; display: flex; margin-right: 1px; border: 2px solid; border-color: #6b6b6b #fff #fff #6b6b6b; border-right-width: 1px; background: #fff; overflow: hidden; }
.tree { flex: 1; padding-top: 1px; background: repeating-linear-gradient(#999 0 1px, transparent 1px 2px) 30px 0 / 1px 100% no-repeat, repeating-linear-gradient(#999 0 1px, transparent 1px 2px) 50px 0 / 1px 100% no-repeat; }
.row { height: 25px; display: flex; align-items: center; gap: 6px; padding-left: 63px; letter-spacing: -.2px; background: repeating-linear-gradient(90deg, #999 0 1px, transparent 1px 2px) 51px 11px / 9px 1px no-repeat; }
.row svg { width: 16px; height: 16px; margin-top: -3px; }
.deep { padding-left: 83px; letter-spacing: -.12px; background: repeating-linear-gradient(90deg, #999 0 1px, transparent 1px 2px) 70px 11px / 10px 1px no-repeat, repeating-linear-gradient(#999 0 1px, transparent 1px 2px) 70px 0 / 1px 100% no-repeat; }
.last { background-size: 10px 1px, 1px 12px; }
.expand { background: linear-gradient(#000, #000) 48px 11px / 5px 1px no-repeat, linear-gradient(#000, #000) 50px 9px / 1px 5px no-repeat, linear-gradient(#fff, #fff) 47px 8px / 7px 7px no-repeat, linear-gradient(#888, #888) 46px 7px / 9px 9px no-repeat; }
.vscroll, .hscroll { background: repeating-conic-gradient(#fff 0 25%, #efefef 0 50%) 0 0 / 2px 2px; display: flex; }
.vscroll { width: 26px; flex-direction: column; }
.sbtn, .thumb { background: #efefef; border: 2px solid; border-color: #fff #6b6b6b #6b6b6b #fff; flex: none; }
.sbtn { width: 26px; height: 25px; display: flex; align-items: center; justify-content: center; }
.end { margin-top: auto; }
.tree-thumb { height: 85px; margin-top: 188px; }
.doc { height: 29px; margin-top: 8px; border-top: 2px solid #777; letter-spacing: -.8px; }
.docbar { height: 32px; flex: none; display: flex; padding-left: 17px; }
.docbar svg { margin-top: 3px; }
.docname { width: 199px; height: 23px; margin-left: 26px; text-align: center; line-height: 21px; letter-spacing: -.35px; border: 1px solid; border-color: #fff #9d9d9d #9d9d9d #fff; }
.check { width: 18px; height: 18px; margin: 2px 0 0 9px; background: #fff; border: 1px solid; border-color: #6b6b6b #fff #fff #6b6b6b; box-shadow: 0 0 0 .5px #aaa; }
.doctext { flex: 1; background: #fff; border: solid; margin-right: 1px; border-width: 2px 1px 1px 1px; border-color: #6b6b6b #ddd #ddd #6b6b6b; }
.docktabs { height: 30px; flex: none; display: flex; padding: 1px 0 1px 1px; letter-spacing: -.8px; }
.dt { height: 26px; width: 165px; margin-top: 1px; border: 2px solid #6b6b6b; border-left-width: 1px; text-align: center; line-height: 22px; }
.on { height: 28px; width: 147px; margin-top: 0; border: 1px solid; border-color: #efefef #6b6b6b #6b6b6b #fff; border-bottom-width: 2px; line-height: 27px; }
.dt-rest { flex: 1; border-top: 2px solid #6b6b6b; margin-top: 1px; }

.editor { flex: 1; margin-left: 8px; border: solid; border-width: 0 2px 2px 2px; border-color: #6b6b6b; border-bottom-color: #777; display: flex; flex-direction: column; }
.tabs { height: 32px; flex: none; display: flex; align-items: flex-start; padding: 2px 0 0 4px; border-bottom: 2px solid #fff; }
.corner { width: 29px; padding: 5px 0 0 1px; }
.tab { height: 28px; flex: none; display: flex; align-items: center; border: solid; border-width: 1px 2px 0 1px; border-color: #fff #6b6b6b #fff #fff; letter-spacing: -.45px; }
.ti { width: 24px; height: 24px; margin-right: 4px; }
.tx { width: 14px; height: 14px; margin: -1px 0 0 auto; color: #bdbdbd; }
.tab span { margin-top: -1px; }
.t1 { width: 191px; padding: 0 22px 0 14px; }
.t2 { width: 289px; padding: 0 22px 0 17px; letter-spacing: -.57px; }
.t3 { width: 228px; padding: 0 22px 0 17px; }
.t4 { width: 240px; padding: 0 24px 0 17px; border-right: 1px solid #fff; letter-spacing: -.8px; }
.t5 { width: 194px; padding: 0 22px 2px 16px; margin-top: -1px; height: 30px; }
.t5 .tx { color: #e2694a; }
.view { flex: 1; display: grid; grid-template: 816px 26px / 1501px 26px; align-content: start; border: solid #6b6b6b; border-width: 2px 0 0 1px; padding-left: 1px; margin: 0 1px; background: #fff; }
.big .sbtn { height: 25px; }
.big .end { margin-bottom: 1px; }
.view-thumb { height: 362px; margin-top: 8px; }
.hscroll { border-bottom: 1px solid #fff; }
.h-thumb { width: 798px; margin-left: 12px; }
.hend { margin-left: auto; }
.nook { background: #efefef; }

.taskbar { flex: 1; display: flex; border-top: 2px solid #a6bac0; background: #cfe8ee; }
.weather { margin: 5px 0 0 12px; }
.start { margin: 17px 0 0 190px; }
.search { width: 329px; height: 48px; margin: 10px 0 0 20px; border: 1px solid #b9d2da; border-bottom: 2px solid #b5cfd6; border-radius: 24px; background: #f0f8fa; display: flex; align-items: center; gap: 15px; padding-left: 15px; font-size: 19.500px; letter-spacing: -.2px; color: #666; }
.apps { display: flex; margin: 6px 0 0 5px; gap: 10.150px; }
.app { width: 56px; height: 56px; padding: 0 4px; border-radius: 6px; }
.app:first-child { margin-right: 2px; }
.app svg { width: 48px; height: 56px; overflow: visible; }
.current { background: #e6f2f7; box-shadow: 0 1px 1px #b5cfd6; margin-left: -2px; }
.chev { margin: 29px 0 0 39px; }
.lang, .clock { display: flex; flex-direction: column; font-size: 17px; line-height: 23px; margin-top: 11px; color: #1c1c1c; }
.lang { width: 48px; margin-left: 24px; align-items: center; }
.sys { margin: 20px 0 0 21px; }
.clock { width: 95px; margin-left: 21px; align-items: flex-end; font-size: 17.500px; letter-spacing: .05px; }
.count { width: 24px; height: 24px; border-radius: 50%; background: #25808f; color: #fff; font-size: 15px; line-height: 24px; text-align: center; margin: 22px 0 0 11px; }
```
